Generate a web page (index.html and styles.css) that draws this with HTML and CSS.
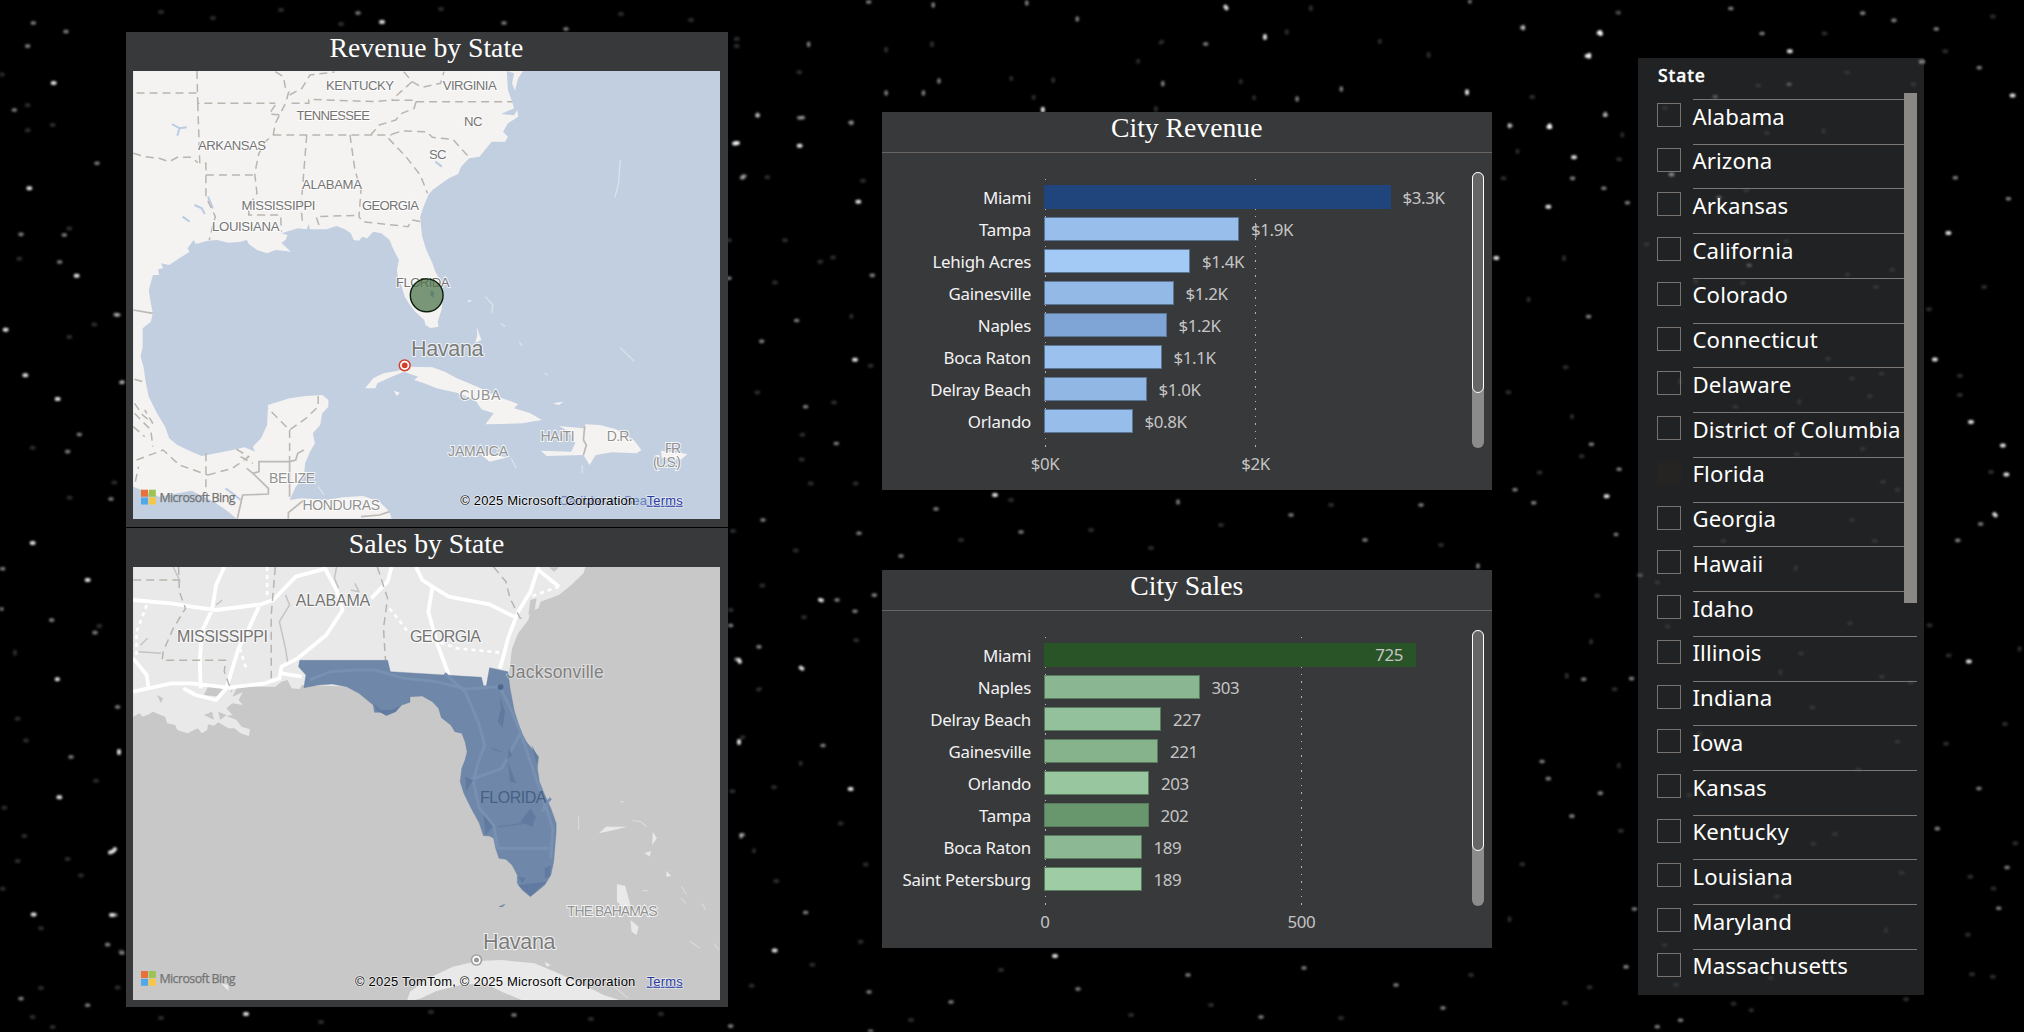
FILE: index.html
```html
<!DOCTYPE html>
<html lang="en">
<head>
<meta charset="utf-8">
<title>Revenue and Sales by State</title>
<link rel="stylesheet" href="styles.css">
</head>
<body>
<svg class="sky" viewBox="0 0 2024 1032" aria-hidden="true">
  <g transform="scale(.3333 .6583)">
    <path class="star s1" d="M158 126h18M85 286h20l12 3M227 419h15M14 501h20M73 570h17M170 606h18M95 825h18M260 881h18M170 1032h4M175 1211h20M330 1295l16 -3M98 1389h17M333 1390h15"/>
    <path class="star s2" d="M97 35h16M195 48h14M80 70h25M40 167h6M288 248h12M60 356h8M190 357h16M176 398h8l8 6M345 478h15M362 581h10M235 660h18M200 686h18M330 758h16M5 864h12M0 925h18M152 942h10M282 961h8M350 1074h8M210 1150h18M320 1435h16M60 1517h8M260 1527h18"/>
    <path class="star s3" d="M2 113h14M80 198h26M155 190h24M80 160h16M205 347h8M55 393h20M205 512h14M280 493h12M95 680h14M340 733h10M206 756h10M50 1092h16M75 1125h10M10 1227h22M70 1270h12M50 1308h14M5 1350h28M200 1305h40M240 1330h16M120 1410h6M360 1445h10M120 1501h12M350 1500h16M95 1545h18M155 1560h20M45 990v10M285 1186h10M295 951h12"/>
  </g>
  <g transform="translate(728 100) scale(.3333 .5944)">
    <path class="star s1" d="M18 73h17M212 77h18M378 437h18M276 841l22 3M218 955l12 4M365 1159h10M137 1431h14M388 171h14"/>
    <path class="star s2" d="M86 26h9M212 30h18M366 38h8M40 131h16M0 300h8M430 295h24M203 371h12M98 406h10M230 516h22M322 578h14M390 729h16M436 833h6M378 860h6M90 920h14M24 941h10M282 1086h14M40 1236h6M230 1367h22M425 1567h18M5 1558h18M5 884h18"/>
    <path class="star s3" d="M115 130h26M402 136h26M0 236h12M168 236h20M274 272h10M312 265h22M138 307h20M370 363v2M425 447h16M85 492h12M315 509h24M220 563h18M245 645h18M380 645h20M200 758h18M100 817h14M225 870h20M382 909h18M90 992l20 -4h15M42 1072h4M218 1115v2M10 1163h25M135 1156h18M335 1217h25M78 1262v2M410 1286h6M142 1314h16M395 1416h22M250 1455h16M68 1490h10M5 858h20M218 605h14M12 725h24"/>
  </g>
  <g transform="translate(730 0) scale(.574 .3333)">
    <path class="star s1" d="M863 20l5 12M932 108v10M1516 96l3 14M1284 274v6M545 326v8M1497 164v6M1428 376v9"/>
    <path class="star s2" d="M517 6v8M605 54v10M354 12v8M137 130v12M364 240v10M272 276v8M337 276v8M754 248v10M988 294v8M1289 0v7M1382 80v6M1065 264v6M48 342v10M1525 340v10M126 353h2M827 132h6M1358 374v8M240 6h4"/>
    <path class="star s3" d="M970 94v4M1132 122v4M750 128l8 -8M352 130v8M272 146v10M711 182v3M563 238v5M529 290v4M913 292v3M1217 162v35M1012 22v6M212 366v6M119 217h6M10 117h6M10 138h6M490 234v3M890 243v3M1396 291h6M742 324v6M1548 38v1"/>
  </g>
  <g transform="translate(1480 0) scale(.347 .6582)">
    <path class="star s1" d="M342 50l14 3M307 85h18M890 78h18M197 193h16M268 239h12M194 314h18M44 392h16M1532 145h18M1308 546h18M1270 94h16M1412 641h14M1504 677h18M1514 721h18M1482 781l10 5M1406 1005h14M1347 354h16M362 754h8M549 265h20"/>
    <path class="star s2" d="M120 42h14M720 13h8M810 51h12M1100 20h10M1190 31h10M358 175h14M84 191h6M264 271h6M354 286h20M422 308h14M1367 270h10M1520 302h16M310 481h12M318 675h6M398 713h6M98 744h18M152 764h20M1440 796h12M390 812h4M1374 821h14M434 1031h14M296 1032h6M176 1157h6M194 1183h12M262 1240h10M344 1205h14M442 1381h14M418 1469h10M508 1560h8M575 1550h6M1315 1259h8M1516 1318h18M1435 1198h6M1492 1380h6M1312 44h10M1436 103h16M888 128h8M675 147h14M773 403h12M686 300h16M459 874h16"/>
    <path class="star s3" d="M990 51h18M395 19h10M410 204v2M398 242h18M65 271h10M108 229v2M242 391v4M140 454v2M244 558h16M79 596h18M265 632v2M290 693h34M169 718h18M335 905h8M320 974v2M250 1025v6M400 1162v2M119 1313h18M85 1395v3M313 1500h14M242 1524h8M403 1262h14M385 1047h8M799 130h20M530 164h6M1055 110h6M1246 128h6M824 202h20M990 198v2M765 289h10M477 371h18M880 366h12M755 430h14M1057 417h4M1185 410h10M1138 436h14M640 526h12M1000 545h8M1069 575h18M1154 568h8M576 578v4M920 609v4M1120 602h8M733 618h14M910 690h6M1100 682h8M1158 732h16M1200 744h6M1070 790h4M1135 822h14M698 822h6M910 862v3M1063 947h16M922 993h8M866 1020v3M1155 1028h6M1238 1037h18M955 1075h6M630 1115h6M1200 1127h6M1088 1169h8M600 1208h6M958 1282h14M1020 1267h8M1212 1326h6M853 1362h16M1170 1412v3M530 1436h4M562 1496h10M835 1486h6M1338 78h16M1475 25h10M1380 571h6M1450 436h38M1470 717h14M1293 950h16M1348 996h18M1540 1281h12M1410 1332h8M1477 1350h14M1415 1480h8M1475 1484h10M1225 1518h10M728 1525h14M780 1535h4M508 885h10M538 952h16M1291 470h16M1555 985v2M1380 600h10M1510 1100h12M1340 1130h10M1403 1420h16M620 426l12 10"/>
  </g>
  <path class="star s1" d="M381 22h2M736 143h2M245 1014h2M119 751v4M739 660l2 4M739 741v5M994 495h2M1054 956h3M115 849l-3 4"/>
  <path class="star s2" d="M503 23h3M565 29h2M743 176h2M513 1015h3M117 315h3M122 382h1M741 835v3M114 915h2M121 953h2M762 520h2M935 509h4M1178 501v2M1020 532h3M1290 515h2M1364 540h3M836 600h3M900 556h3M1478 565v2M1420 505h2M1077 989h2M1187 975h3M950 1002h3M1303 968h2M1395 985h3M1260 1017h3M868 992h2M1442 1008h2M357 13h2"/>
  <path class="star s3" d="M160 12h4M212 18h2M280 10h3M440 9h3M620 14h2M690 20h3M340 24h4M160 1018h3M320 1022h2M430 1012h3M590 1019h3M660 1014h2M960 540h3M1090 530h4M1150 548h2M1220 525h3M1330 505h3M1440 545h2M1010 500h3M910 1020h3M1130 1015h3M1210 1005h2M1340 1018h3M1470 975h2M1000 970h2"/>
</svg>

<main class="dashboard">
  <section class="maps">
    <article class="card map-card">
      <h2>Revenue by State</h2>
      <svg class="map" viewBox="133 71 587 448" preserveAspectRatio="none">
        <rect x="133" y="71" width="587" height="448" fill="#c2cfe0"/>
        <g transform="translate(110 20) scale(.40816 .33333)">
          <g class="land">
            <path d="M57 153H1012L1000 175 992 212 985 190 990 160 972 153 975 210 985 245 990 265 958 282 990 286 998 270 1000 290 975 310 963 335 975 350 968 365 935 365 905 410 880 415 860 440 853 462 830 475 790 510 780 525 768 560 760 590 762 620 765 650 775 690 790 730 797 755 812 785 817 825 812 870 803 905 805 920 785 924 773 915 770 900 748 875 735 855 722 830 715 800 705 770 703 750 708 720 695 690 685 660 665 640 645 635 630 655 618 650 610 662 597 660 590 640 575 628 555 618 530 628 490 628 487 612 482 628 460 625 440 632 420 640 435 645 430 660 420 668 430 680 443 695 425 692 405 690 385 700 360 690 340 672 335 660 320 665 290 668 262 660 240 662 210 672 205 660 190 685 195 695 170 715 145 735 125 730 130 745 118 748 120 765 105 765 95 810 100 850 105 880 100 905 80 925 80 980 75 1010 82 1040 88 1090 95 1130 115 1180 135 1220 145 1255 165 1275 200 1295 225 1308 260 1300 300 1290 330 1282 355 1295 350 1280 370 1255 385 1215 387 1155 440 1135 480 1128 520 1125 535 1140 535 1160 520 1180 515 1215 497 1240 502 1270 490 1295 478 1330 475 1370 455 1400 440 1440 470 1435 530 1440 570 1432 620 1428 660 1445 685 1475 690 1496H310L290 1475 260 1450 230 1430 200 1412 120 1430 57 1400Z"/>
            <path d="M625 1105L645 1075 670 1060 705 1052 735 1040 790 1042 820 1055 850 1075 900 1100 950 1130 1000 1152 990 1165 1030 1180 1058 1200 1010 1210 920 1213 940 1180 910 1168 895 1140 850 1118 800 1105 770 1090 745 1080 755 1070 720 1055 690 1070 655 1090 650 1105Z"/>
            <path d="M1100 1218L1160 1225 1165 1213 1200 1215 1240 1228 1285 1262 1302 1290 1290 1300 1230 1297 1190 1305 1175 1335 1160 1305 1070 1308 1055 1292 1130 1295 1140 1270 1125 1235ZM905 1300L975 1312 930 1325ZM1350 1292L1415 1302 1400 1318 1352 1315ZM695 1112L710 1118 703 1128ZM898 920L910 960 895 968 900 945ZM1085 1150L1110 1145 1100 1155ZM875 842L888 840 880 847Z"/>
          </g>
          <path class="islet" d="M1250 420L1246 490 1237 532M920 830L938 855 935 880M958 910L968 920M1002 965L1010 978M1065 1060L1072 1066M1250 983L1285 1025M510 1400L525 1425M983 1315L995 1345M1157 1335V1360"/>
          <path class="lake" d="M152 312L170 325 188 322M170 325L165 347M207 555L225 565 232 582M240 530L252 565M178 590L195 605M797 425L813 440M283 1405L300 1420 320 1440"/>
          <path class="border dash" d="M65 219H213M213 153L215 250H405M215 250L220 430H235V530L258 590 243 660M235 465H355M57 400L85 410 120 415 145 425 165 412 200 412 215 428M405 155L425 170 430 205 438 215 430 250 405 310 400 345 380 365 365 400 358 440 355 465 360 520 340 560 340 585H418L420 635M400 345H690M445 250H487V238L650 245 680 241H750M750 245H985M440 225L470 205 490 165 550 156M720 155L740 185 690 240M740 185L765 202 810 190 818 155M750 245L745 265 715 280 700 300 660 315 640 343M405 255L390 282 420 285M690 343L715 333 775 335 790 352 840 358 882 415M682 355L725 410 760 465 778 520M482 345L468 560 472 612M588 345L600 450 615 510 610 590 618 605 730 620 740 600 762 605M512 615L505 590 605 586M510 1128V1160L480 1195 440 1230 387 1165M440 1230V1325M60 1150L80 1185 105 1210 85 1170M57 1220L85 1250M60 1180L100 1230 105 1280M65 1320L130 1290 170 1335 240 1365M235 1300V1410M240 1365L300 1345 340 1310 300 1280M62 1385L70 1340M320 1310L350 1330M60 1078L80 1085"/>
          <path class="border" d="M57 870L105 880M440 1325H365V1355L350 1360 388 1405V1422L325 1425 312 1496M335 1345L350 1360M440 1325V1430M440 1325L455 1320 460 1300 475 1290M437 1496V1478L475 1440M615 1490L660 1485 685 1475M1163 1218L1160 1260 1167 1275 1160 1305"/>
        </g>
        <g class="labels">
          <text x="326" y="91" textLength="68">KENTUCKY</text>
          <text x="442.700" y="91" textLength="54">VIRGINIA</text>
          <text x="296.500" y="121" textLength="73.500">TENNESSEE</text>
          <text x="464" y="127" textLength="18.500">NC</text>
          <text x="198" y="151" textLength="68">ARKANSAS</text>
          <text x="429" y="160" textLength="17.500">SC</text>
          <text x="302" y="189.500" textLength="60">ALABAMA</text>
          <text x="241.500" y="210.500" textLength="74">MISSISSIPPI</text>
          <text x="362" y="210.500" textLength="57">GEORGIA</text>
          <text x="212" y="231.500" textLength="67.500">LOUISIANA</text>
          <text x="396" y="288" textLength="53.500">FLORIDA</text>
          <text class="light" x="459.400" y="401" textLength="41">CUBA</text>
          <text class="light" x="540.600" y="442" textLength="34">HAITI</text>
          <text class="light" x="606.700" y="442" textLength="26">D.R.</text>
          <text class="light" x="448" y="457" textLength="60">JAMAICA</text>
          <text class="light" x="665" y="454" textLength="16">PR</text>
          <text class="light" x="653" y="467.500" textLength="28">(U.S.)</text>
          <text class="light" x="269" y="484" textLength="46">BELIZE</text>
          <text class="light" x="302.600" y="511" textLength="77.500">HONDURAS</text>
          <text class="city" x="411" y="356.500" textLength="72.500">Havana</text>
          <text class="sea" x="559" y="506" textLength="88">Caribbean Sea</text>
        </g>
        <circle cx="426.700" cy="295.300" r="16.400" fill="#4b724a" fill-opacity=".72" stroke="#0b1d0b" stroke-width="1.400"/>
        <path d="M431 290l3 2v6l-4-3z" fill="#5d8570"/>
        <circle cx="404.700" cy="365.300" r="5.400" fill="#fff" stroke="#d2402c" stroke-width="1.500"/>
        <circle cx="404.700" cy="365.300" r="2.900" fill="#d2402c"/>
        <g class="bing">
          <path d="M141 489.700h7v7h-7z" fill="#e8703a"/><path d="M148.800 489.700h7v7h-7z" fill="#9bc455"/>
          <path d="M141 497.500h7v7h-7z" fill="#4fa9e8"/><path d="M148.800 497.500h7v7h-7z" fill="#f7c646"/>
          <text x="159.400" y="501.500" textLength="76">Microsoft Bing</text>
        </g>
        <g class="credit">
          <text x="460.200" y="504.500" textLength="175">© 2025 Microsoft Corporation</text>
          <text class="terms" x="646.700" y="504.500" textLength="36">Terms</text>
        </g>
      </svg>
    </article>

    <article class="card map-card">
      <h2>Sales by State</h2>
      <svg class="map" viewBox="133 567 587 433" preserveAspectRatio="none">
        <rect x="133" y="567" width="587" height="433" fill="#c8c8c8"/>
        <g transform="translate(110 515) scale(.40816 .33333)">
          <path fill="#e9e9e9" d="M57 156H1165L1160 175 1130 210 1100 240 1055 260 1050 280 1030 290 1025 315 1000 355 985 400 978 470 960 530 470 510 465 522 445 520 435 495 420 500 405 515 340 515 310 520 300 545 325 532 315 555 325 570 300 565 285 580 300 600 285 603 310 615 322 635 343 643 340 663 320 655 305 640 290 640 265 622 255 632 240 628 238 645 225 655 215 640 190 655 165 645 160 630 140 625 135 605 105 590 95 598 80 605 72 595 57 605Z"/>
          <path fill="#c8c8c8" d="M240 515L280 515 270 545 230 540ZM230 600L250 590 255 615ZM1030 255L1045 250 1040 290 1025 300ZM115 540L130 550 125 565ZM265 590L285 600 270 615ZM1075 157H1100L1088 170Z"/>
          <path class="road" d="M57 255L150 265 200 275 260 285 370 268 400 255 455 185 530 160M280 156L260 210 250 285 225 350 220 440 222 520M525 156L555 225 570 285 530 360 460 430 420 455 415 490 380 505 290 518 200 505 150 505 57 530M365 275L340 340 315 400 285 520 260 555 210 540 180 520M750 156L765 195 790 215 830 245 930 268 990 305M790 215L780 290 800 380 830 480M1050 156L1030 230 1000 290 975 370 965 420 955 460M1045 160L1100 215M690 156L680 200 640 250M57 430L90 480 95 525M420 475L470 485"/>
          <path class="road dots" d="M685 280L730 350 850 400 950 412 975 405M385 156V240M90 270L65 350V420M1100 215L1030 245M318 400L335 465"/>
          <path class="river" d="M430 240L440 270 415 320 430 400 435 440M555 156L550 190 560 220M590 225L610 230 600 205M70 410L125 415M260 270L275 255M155 156L172 200M75 390L92 370"/>
          <path class="border dash" d="M57 195H170M168 156L170 230 185 280 155 340 130 410 128 436H283L280 470 298 530M405 156L395 300 395 490M655 156L680 250 670 340 675 436M940 156L970 200 980 250 1005 310 1020 310"/>
          <path fill="#6f88a9" stroke="#5f7a9f" stroke-width="1" d="M465 436L680 436 687 470 910 487 915 512 922 512 930 458 975 470 980 520 990 585 1005 645 1020 680 1050 725 1047 760 1052 800 1065 840 1080 880 1093 925 1093 950 1087 1040 1080 1080 1065 1110 1030 1145 1010 1125 998 1105 998 1080 985 1050 970 1033 953 1030 945 1000 940 970 930 963 915 962 905 925 885 880 867 835 858 800 862 760 870 735 875 710 870 680 862 655 845 650 835 630 812 608 805 580 790 560 765 543 735 545 735 562 715 570 700 590 677 602 665 592 648 592 645 570 610 535 580 515 545 507 510 510 475 518 480 480 462 455ZM953 1175L968 1167 962 1175Z"/>
          <path class="froad" d="M490 495L540 470 600 465 650 465 720 490 800 500 870 522 955 515 985 590 1005 650 1030 740 1055 830 1085 940 1080 1030M820 475L870 530 905 630 918 690 900 750 890 800 905 880 940 930 950 1000 1075 1000M870 800L960 760 1005 655M1080 850L1065 870 1060 890"/>
          <path fill="#607b9f" d="M1030 880L1043 905 1035 935 1005 920ZM1000 1110L1070 1100 1030 1143ZM1065 1060L1080 1050 1078 1085 1065 1090ZM955 545L968 590 962 640 950 620 958 580ZM915 900L938 935 920 960ZM870 785L890 795 872 830ZM975 740L995 805 980 800ZM645 568L655 588 675 600 700 590 710 572 690 585 665 585ZM1033 690L1048 725 1045 745ZM1000 1085L1018 1090 1010 1105ZM978 700L985 720 972 735ZM930 695L970 715 940 705Z"/>
          <path d="M950 935L985 930 1015 925" fill="none" stroke="#607b9f" stroke-width="3"/>
          <ellipse cx="957" cy="516" rx="7" ry="8.500" fill="#4c678d"/>
          <path fill="#e9e9e9" d="M728 1455L735 1430 780 1390 840 1355 900 1338 960 1335 1040 1345 1090 1370 1160 1410 1210 1440 1250 1456H1010L960 1430 920 1405 860 1410 800 1428 762 1450 745 1456ZM1198 955L1215 935 1267 935 1225 948ZM1330 950L1340 970 1328 990ZM1242 1108L1262 1112 1275 1170 1260 1180 1242 1160ZM1275 1215L1295 1235 1290 1260 1278 1250ZM1363 1068L1375 1083 1363 1085ZM1310 1015L1325 1008 1323 1025ZM272 1405L290 1410V1428ZM1395 1150L1410 1165ZM1065 1340L1080 1350 1070 1355Z"/>
          <path class="islet faint" d="M1148 905V945M1280 917L1300 920 1315 935M1400 1115L1412 1138M1398 1150L1412 1165M1450 1165L1460 1185M1420 1278L1445 1300M1480 1285L1492 1305M1305 1127H1318M1235 1415L1270 1450M1250 860H1258"/>
        </g>
        <g class="labels labels-big">
          <text x="295.700" y="607" textLength="74.500">ALABAMA</text>
          <text x="177" y="643" textLength="91">MISSISSIPPI</text>
          <text x="410" y="643" textLength="71">GEORGIA</text>
          <text class="florida" x="480" y="804" textLength="66.500">FLORIDA</text>
          <text class="light small" x="567" y="917" textLength="90.500">THE BAHAMAS</text>
          <text class="town" x="506.700" y="678.500" textLength="97">Jacksonville</text>
          <text class="city" x="483" y="950" textLength="72.500">Havana</text>
        </g>
        <circle cx="476.500" cy="960" r="5" fill="#fff" stroke="#a3a3a3" stroke-width="1.700"/>
        <circle cx="476.500" cy="960" r="2.500" fill="#999"/>
        <g class="bing">
          <path d="M141 971h7v7h-7z" fill="#e8703a"/><path d="M148.800 971h7v7h-7z" fill="#9bc455"/>
          <path d="M141 978.800h7v7h-7z" fill="#4fa9e8"/><path d="M148.800 978.800h7v7h-7z" fill="#f7c646"/>
          <text x="159.400" y="982.800" textLength="76">Microsoft Bing</text>
        </g>
        <g class="credit">
          <text x="355" y="985.500" textLength="280.300">© 2025 TomTom, © 2025 Microsoft Corporation</text>
          <text class="terms" x="646.700" y="985.500" textLength="36">Terms</text>
        </g>
      </svg>
    </article>
  </section>

  <section class="charts">
    <article class="card chart-card">
      <h2>City Revenue</h2>
      <div class="plot">
        <i class="grid-line" style="left:162.500px"></i><i class="grid-line" style="left:373px"></i>
        <div class="row"><span class="cat">Miami</span><span class="bar" style="width:346.500px;background:#1f457c"></span><span class="val">$3.3K</span></div>
        <div class="row"><span class="cat">Tampa</span><span class="bar lined" style="width:195px;background:#98beeb"></span><span class="val">$1.9K</span></div>
        <div class="row"><span class="cat">Lehigh Acres</span><span class="bar lined" style="width:146px;background:#a3c9f5"></span><span class="val">$1.4K</span></div>
        <div class="row"><span class="cat">Gainesville</span><span class="bar lined" style="width:129.500px;background:#93b9e6"></span><span class="val">$1.2K</span></div>
        <div class="row"><span class="cat">Naples</span><span class="bar lined" style="width:122.500px;background:#7ea5d5"></span><span class="val">$1.2K</span></div>
        <div class="row"><span class="cat">Boca Raton</span><span class="bar lined" style="width:117.500px;background:#9bc1ee"></span><span class="val">$1.1K</span></div>
        <div class="row"><span class="cat">Delray Beach</span><span class="bar lined" style="width:102.500px;background:#91b7e4"></span><span class="val">$1.0K</span></div>
        <div class="row"><span class="cat">Orlando</span><span class="bar lined" style="width:88.500px;background:#97bdea"></span><span class="val">$0.8K</span></div>
        <span class="tick" style="left:163px">$0K</span><span class="tick" style="left:373.500px">$2K</span>
        <div class="scroll"><i class="thumb"></i></div>
      </div>
    </article>

    <article class="card chart-card">
      <h2>City Sales</h2>
      <div class="plot">
        <i class="grid-line" style="left:162.500px"></i><i class="grid-line" style="left:419px"></i>
        <div class="row"><span class="cat">Miami</span><span class="bar inside" style="width:371.500px;background:#285427"><b>725</b></span></div>
        <div class="row"><span class="cat">Naples</span><span class="bar glined" style="width:155.500px;background:#8ab791"></span><span class="val">303</span></div>
        <div class="row"><span class="cat">Delray Beach</span><span class="bar glined" style="width:117px;background:#93c19b"></span><span class="val">227</span></div>
        <div class="row"><span class="cat">Gainesville</span><span class="bar glined" style="width:114px;background:#86b28c"></span><span class="val">221</span></div>
        <div class="row"><span class="cat">Orlando</span><span class="bar glined" style="width:105px;background:#98c69f"></span><span class="val">203</span></div>
        <div class="row"><span class="cat">Tampa</span><span class="bar glined" style="width:104.500px;background:#68966d"></span><span class="val">202</span></div>
        <div class="row"><span class="cat">Boca Raton</span><span class="bar glined" style="width:97.500px;background:#8cb993"></span><span class="val">189</span></div>
        <div class="row"><span class="cat">Saint Petersburg</span><span class="bar glined" style="width:97.500px;background:#9dcca5"></span><span class="val">189</span></div>
        <span class="tick" style="left:163px">0</span><span class="tick" style="left:419.500px">500</span>
        <div class="scroll"><i class="thumb"></i></div>
      </div>
    </article>
  </section>

  <aside class="slicer">
    <h3>State</h3>
    <ul>
      <li><i class="box"></i><span>Alabama</span></li>
      <li><i class="box"></i><span>Arizona</span></li>
      <li><i class="box"></i><span>Arkansas</span></li>
      <li><i class="box"></i><span>California</span></li>
      <li><i class="box"></i><span>Colorado</span></li>
      <li><i class="box"></i><span>Connecticut</span></li>
      <li><i class="box"></i><span>Delaware</span></li>
      <li><i class="box"></i><span>District of Columbia</span></li>
      <li><i class="box checked"></i><span>Florida</span></li>
      <li><i class="box"></i><span>Georgia</span></li>
      <li><i class="box"></i><span>Hawaii</span></li>
      <li><i class="box"></i><span>Idaho</span></li>
      <li><i class="box"></i><span>Illinois</span></li>
      <li><i class="box"></i><span>Indiana</span></li>
      <li><i class="box"></i><span>Iowa</span></li>
      <li><i class="box"></i><span>Kansas</span></li>
      <li><i class="box"></i><span>Kentucky</span></li>
      <li><i class="box"></i><span>Louisiana</span></li>
      <li><i class="box"></i><span>Maryland</span></li>
      <li><i class="box"></i><span>Massachusetts</span></li>
    </ul>
    <i class="slicer-scroll"></i>
  </aside>
</main>
</body>
</html>
```
FILE: styles.css
```css
* { box-sizing: border-box; }
body {
  margin: 0;
  width: 2024px;
  height: 1032px;
  overflow: hidden;
  background: #000;
  font-family: "Noto Sans", "Open Sans", sans-serif;
}
.sky { position: absolute; inset: 0; width: 2024px; height: 1032px; filter: blur(1px); }
.star { fill: none; stroke: #fff; stroke-linecap: round; stroke-linejoin: round; stroke-dasharray: 2 100; }
.star, .border, .road, .froad, .river, .islet, .lake { vector-effect: non-scaling-stroke; }
.s1 { stroke-width: 4px; opacity: .85; }
.s2 { stroke-width: 3.6px; opacity: .48; }
.s3 { stroke-width: 4px; opacity: .17; }

.dashboard { position: relative; display: flex; align-items: flex-start; width: 2024px; height: 1032px; padding-left: 126px; }
.card { background: #38393b; }
.card h2 {
  margin: 0;
  text-align: center;
  font: 400 27.7px/31px "Liberation Serif", serif;
  color: #fff;
}

.maps { width: 602px; padding-top: 32px; display: flex; flex-direction: column; gap: 1.5px; }
.map-card { height: 494.5px; padding: 0 8px 0 7px; }
.map-card + .map-card { height: 479px; }
.map-card h2 { height: 39px; }
.map { display: block; width: 587px; height: 448px; }
.map-card + .map-card .map { height: 433px; }
.land { fill: #f5f3f2; }
.islet, .lake, .border, .road, .froad, .river { fill: none; }
.islet { stroke: #dde3ea; stroke-width: 1.2px; }
.faint { stroke: #dadada; }
.lake { stroke: #b9cce4; stroke-width: 2px; }
.border { stroke: #bdb9b6; stroke-width: 1.7px; }
.dash { stroke: #b9b5ae; stroke-width: 1.5px; stroke-dasharray: 8 5; }
.road { stroke: #fff; stroke-width: 3.8px; stroke-linejoin: round; }
.dots { stroke-width: 2.6px; stroke-dasharray: 4 4; }
.froad { stroke: #7890b1; stroke-width: 3px; stroke-linejoin: round; }
.river { stroke: #c4c4c4; stroke-width: 1.5px; }
.labels { transform: translateY(-.8px); }
.labels text {
  font: 13.2px "Liberation Sans", Arial, sans-serif;
  fill: #747474;
  paint-order: stroke;
  stroke: rgba(255, 255, 255, .75);
  stroke-width: 2px;
}
.labels.labels-big text { font-size: 16px; }
.labels text.light { font-size: 14px; fill: #929292; }
.labels.labels-big text.small { font-size: 14px; }
.labels.labels text.city { font-size: 21.5px; fill: #7b7b7b; }
.labels.labels-big text.town { font-size: 17.5px; fill: #808080; stroke: rgba(255, 255, 255, .4); }
.labels.labels text.florida { fill: #465f83; stroke: none; }
.labels.labels text.sea { fill: #6a80bd; stroke: none; }
.bing text { font: 12.4px "Open Sans", "Noto Sans", sans-serif; fill: #737373; stroke: #737373; stroke-width: .25px; }
.credit text { font: 13px "Liberation Sans", Arial, sans-serif; fill: #000; paint-order: stroke; stroke: rgba(255, 255, 255, .6); stroke-width: 1.5px; }
.credit .terms { fill: #2538a0; text-decoration: underline; }

.charts { width: 609.5px; margin-left: 154px; padding-top: 112px; display: flex; flex-direction: column; gap: 80px; }
.chart-card { height: 378px; }
.chart-card h2 { height: 41px; border-bottom: 1.5px solid #686461; }
.plot { position: relative; height: 337px; padding-top: 32px; }
.grid-line {
  position: absolute;
  top: 26px;
  width: 1.4px;
  height: 272px;
  background: repeating-linear-gradient(#b5b5b5 0 1.4px, transparent 1.4px 7.4px);
}
.row { position: relative; display: flex; align-items: center; height: 32px; padding-bottom: 8px; }
.cat { width: 149px; margin-right: 13px; text-align: right; white-space: nowrap; font-size: 16.9px; line-height: 24px; color: #f3f3f3; letter-spacing: -.25px; padding-top: 1px; }
.bar { height: 24px; flex: none; }
.lined { border: 1px solid #5b7697; }
.glined { border: 1px solid #587a5d; }
.val, .inside b, .tick { font-size: 16.9px; line-height: 23px; font-weight: 400; color: #c5c5c5; letter-spacing: -.4px; }
.val { margin-left: 12px; }
.inside { display: flex; justify-content: flex-end; padding-right: 12.5px; }
.tick { position: absolute; top: 299px; transform: translateX(-50%); }
.scroll { position: absolute; left: 589.5px; top: 19px; width: 12.5px; height: 276px; border-radius: 6px; background: #8b8b8b; }
.thumb { display: block; height: 221px; border: 1.9px solid #fff; border-radius: 6px; background: #666; }

.slicer { position: relative; margin: 58px 0 0 146.5px; width: 286px; height: 937px; padding: 0 7.5px 0 19px; background: rgba(58, 61, 63, .56); color: #fff; }
.slicer h3 { margin: 0; height: 41px; padding: 4px 0 0 1px; font: 500 17.6px/26px "Noto Sans", "Open Sans", sans-serif; letter-spacing: .9px; -webkit-text-stroke: .4px #fff; }
.slicer ul { margin: 0; padding: 0; list-style: none; }
.slicer li { display: flex; gap: 11.5px; height: 44.74px; }
.box { flex: none; width: 24px; height: 24px; margin-top: 4px; border: 1.4px solid #767371; }
.box.checked { border: 0; background: #252423; }
.slicer li span { flex: 1; border-top: 1.4px solid #7a7673; white-space: nowrap; font-size: 22.2px; line-height: 30px; padding-top: 1.5px; letter-spacing: .1px; }
.slicer-scroll { position: absolute; left: 266px; top: 35px; width: 12.5px; height: 510px; background: #8b8784; }
```
